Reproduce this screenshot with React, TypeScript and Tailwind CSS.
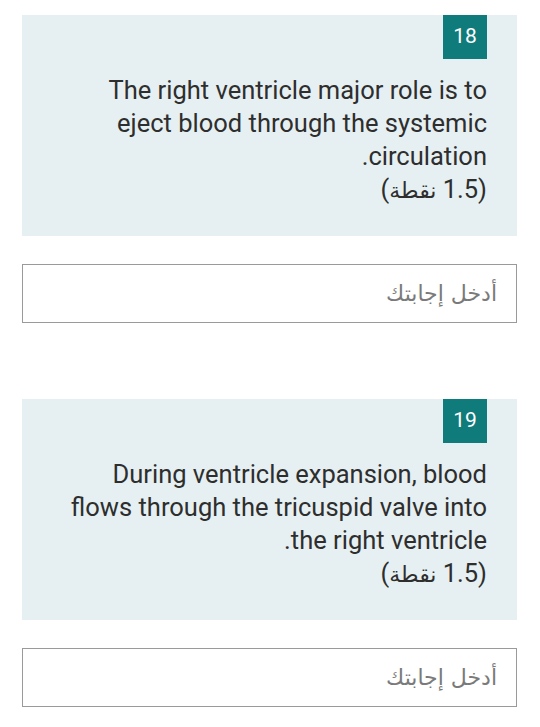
import React from 'react'

type Question = {
  num: number
  lines: string[]
}

// line breaks follow the screenshot
const questions: Question[] = [
  {
    num: 18,
    lines: ['The right ventricle major role is to', 'eject blood through the systemic', 'circulation.']
  },
  {
    num: 19,
    lines: ['During ventricle expansion, blood', 'flows through the tricuspid valve into', 'the right ventricle.']
  }
]

const QuestionBlock = ({ q }: { q: Question }) => {
  return (
    <div>
      {/* Question card */}
      <div className="bg-[#e6f0f2] h-[221px] pr-[30px] pl-4 flex flex-col items-end">
        <div className="w-[44px] h-[44px] bg-[#107b7b] text-white text-[21px] flex items-center justify-center">
          {q.num}
        </div>
        <div dir="rtl" className="mt-[15px] text-[25.5px] leading-[33px] text-[#2e2e2e] text-right whitespace-nowrap">
          {q.lines.map((line, i) => (
            <p key={i}>{line}</p>
          ))}
          <p className="leading-[32px]">
            (1.5 <span className="font-['DejaVu_Sans',sans-serif] text-[22px]">نقطة</span>)
          </p>
        </div>
      </div>

      {/* Answer input */}
      <div className="mt-[28px] h-[59px] border border-[#9a9a9a] flex items-center justify-end pr-[19px]">
        <span dir="rtl" className="text-[22px] text-[#7a7a7a] font-['DejaVu_Sans',sans-serif]">
          أدخل إجابتك
        </span>
      </div>
    </div>
  )
}

const App = () => {
  return (
    <div className="w-[540px] h-[727px] bg-white overflow-hidden font-['Roboto','Noto_Sans',sans-serif]">
      <div className="pt-[15px] pl-[22px] pr-[23px] flex flex-col gap-[76px]">
        {questions.map((q) => (
          <QuestionBlock key={q.num} q={q} />
        ))}
      </div>
    </div>
  )
}

export default App
